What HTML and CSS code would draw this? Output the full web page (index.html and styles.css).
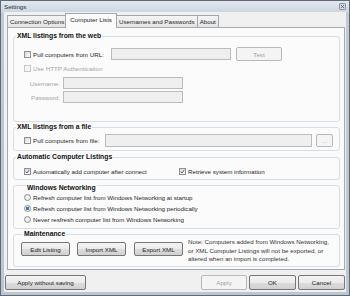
FILE: index.html
```html
<!DOCTYPE html>
<html lang="en">
<head>
  <meta charset="UTF-8">
  <title>Settings</title>
  <link rel="stylesheet" href="styles.css">
</head>
<body>
  <div class="window">
    <div class="titlebar">
      <span class="title">Settings</span>
      <span class="close"><svg width="5" height="5" viewBox="0 0 5 5"><path d="M1 1L4 4M4 1L1 4" stroke="#5b6570" stroke-width="0.9"/></svg></span>
    </div>
    <div class="client">
      <div class="tabs">
        <div class="tab">Connection Options</div>
        <div class="tab active">Computer Lists</div>
        <div class="tab">Usernames and Passwords</div>
        <div class="tab">About</div>
      </div>
      <div class="panel">
        <div class="group web">
          <div class="group-title">XML listings from the web</div>
          <div class="row url-row">
            <label class="check url-label"><span class="box"></span>Pull computers from URL:</label>
            <span class="input url-input"></span>
            <button class="btn disabled test">Test</button>
          </div>
          <div class="row auth-row">
            <label class="check disabled"><span class="box"></span>Use HTTP Authentication</label>
          </div>
          <div class="row field-row first">
            <span class="field-label">Username:</span><span class="input auth-input"></span>
          </div>
          <div class="row field-row">
            <span class="field-label">Password:</span><span class="input auth-input"></span>
          </div>
        </div>

        <div class="group file">
          <div class="group-title">XML listings from a file</div>
          <div class="row file-row">
            <label class="check file-label"><span class="box"></span>Pull computers from file:</label>
            <span class="input file-input"></span>
            <button class="btn disabled dots">...</button>
          </div>
        </div>

        <div class="group auto">
          <div class="group-title">Automatic Computer Listings</div>
          <div class="row auto-row">
            <label class="check auto-label"><span class="box"><svg width="5" height="5" viewBox="0 0 5 5"><path d="M0.8 2.6L2 4L4.3 0.8" fill="none" stroke="#3c5a9a" stroke-width="0.9"/></svg></span>Automatically add computer after connect</label>
            <label class="check"><span class="box"><svg width="5" height="5" viewBox="0 0 5 5"><path d="M0.8 2.6L2 4L4.3 0.8" fill="none" stroke="#3c5a9a" stroke-width="0.9"/></svg></span>Retrieve system information</label>
          </div>
        </div>

        <div class="group net">
          <div class="group-title">Windows Networking</div>
          <div class="radios">
            <label class="radio"><span class="dot"></span>Refresh computer list from Windows Networking at startup</label>
            <label class="radio on"><span class="dot"></span>Refresh computer list from Windows Networking periodically</label>
            <label class="radio"><span class="dot"></span>Never resfresh computer list from Windows Networking</label>
          </div>
        </div>

        <div class="group maint">
          <div class="group-title">Maintenance</div>
          <div class="row maint-row">
            <button class="btn">Edit Listing</button>
            <button class="btn">Import XML</button>
            <button class="btn">Export XML</button>
            <p class="note">Note: Computers added from Windows Networking,<br>or XML Computer Listings will not be exported, or<br>altered when an import is completed.</p>
          </div>
        </div>
      </div>

      <div class="footer">
        <button class="btn wide">Apply without saving</button>
        <button class="btn disabled push">Apply</button>
        <button class="btn">OK</button>
        <button class="btn">Cancel</button>
      </div>
    </div>
  </div>
</body>
</html>
```

FILE: styles.css
```css
* { box-sizing: border-box; }
body { margin: 0; font-family: "Liberation Sans", Arial, sans-serif; font-size: 6.2px; color: #1e1e1e; }

.window { width: 350px; height: 296px; border: 1px solid #5f6a76; padding: 0 3px 3px; display: flex; flex-direction: column;
  background: linear-gradient(#e2e8ef, #cdd6e0 11px, #c0cad5 12px, #bcc6d1); }
.titlebar { height: 11px; display: flex; align-items: center; justify-content: space-between; padding: 0 0 0 0; }
.title { color: #2a2a2a; }
.close { width: 7px; height: 7px; border: 1px solid #8c97a3; border-radius: 1px; background: #d3dae2; display: flex; align-items: center; justify-content: center; }

.client { flex: 1; background: #f0f0f0; padding: 1px 1px 0 3px; display: flex; flex-direction: column; }

.tabs { display: flex; align-items: flex-end; height: 14px; }
.tab { height: 12px; line-height: 11px; padding: 0 2px; border: 1px solid #a2a6ad; border-bottom: none; margin-right: -1px;
  background: linear-gradient(#f4f4f4, #e4e4e4); white-space: nowrap; }
.tab.active { height: 15px; line-height: 12px; padding: 0 4px; margin: 0 -1px -1px -1px; background: #fbfbfb; position: relative; z-index: 1; }

.panel { border: 1px solid #a5a9b0; background: #fbfbfb; padding: 8px 4px 2px 5px; }

.group { border: 1px solid #d5dfe5; border-radius: 3px; }
.group + .group { margin-top: 5px; }
.group.auto { margin-top: 6px; }
.group-title { display: table; margin: -5px 0 0 2px; padding: 0 1px; background: #fbfbfb; font-weight: bold; font-size: 6.8px; line-height: 8px; color: #111; }

.row { display: flex; align-items: center; white-space: nowrap; }

.check { display: flex; align-items: center; gap: 2px; }
.check.disabled { color: #a4a4a4; }
.box { width: 7px; height: 7px; flex: none; border: 1px solid #8f9090; background: linear-gradient(135deg, #d9d9d9, #fafafa);
  display: flex; align-items: center; justify-content: center; }
.check.disabled .box { border-color: #c8c8c8; background: #f4f4f4; }

.input { display: block; height: 12px; border: 1px solid #bcbcbc; background: #efefef; flex: none; }

.btn { font: inherit; color: #1e1e1e; height: 14px; padding: 0; border: 1px solid #777; border-radius: 2px; flex: none;
  background: linear-gradient(#f3f3f3, #ebebeb 50%, #dddddd 51%, #d0d0d0); }
.btn.disabled { color: #a2a2a2; border-color: #b5b9bc; background: #f4f4f4; }

/* web box */
.web { padding-bottom: 18px; }
.url-row { margin-top: 7px; height: 14px; padding-left: 10px; }
.url-label { width: 87px; }
.url-input { width: 120px; }
.test { width: 46px; margin-left: 5px; }
.auth-row { margin-top: 2px; height: 10px; padding-left: 10px; }
.field-row { margin-top: 2px; height: 12px; color: #a4a4a4; }
.field-row.first { margin-top: 4px; }
.field-label { width: 46px; text-align: right; margin-right: 3px; }
.auth-input { width: 120px; }

/* file box */
.file { padding-bottom: 3px; }
.file-row { margin-top: 3px; height: 13px; padding-left: 10px; }
.file-label { width: 81px; }
.file-input { width: 207px; height: 13px; }
.dots { width: 17px; height: 13px; margin-left: 4px; }

/* automatic */
.auto { padding-bottom: 3px; }
.auto-row { margin-top: 5px; height: 10px; padding-left: 10px; }
.auto-label { width: 155px; }

/* networking */
.net { padding: 3px 0 3px 10px; }
.radio { display: flex; align-items: center; gap: 2px; height: 11px; white-space: nowrap; }
.dot { width: 7px; height: 7px; border-radius: 50%; border: 1px solid #8f9090; background: radial-gradient(circle, #fafafa, #dcdcdc); flex: none; }
.radio.on .dot { background: radial-gradient(circle, #2c6fbf 0, #3b82cf 1.5px, #e8eef5 2px); }

/* maintenance */
.maint { padding: 0 0 2px 7px; }
.maint-row { align-items: flex-start; }
.maint-row .btn { width: 49px; margin-top: 4px; margin-right: 7px; }
.maint-row .btn + .btn + .btn { margin-left: 1px; margin-right: 5px; }
.note { margin: 0; line-height: 8.5px; color: #333; white-space: nowrap; }

.footer { display: flex; gap: 2px; margin-top: 5px; }
.footer .btn { height: 15px; width: 47px; }
.footer .wide { width: 81px; margin-left: -2px; }
.footer .push { margin-left: auto; width: 46px; }
```
